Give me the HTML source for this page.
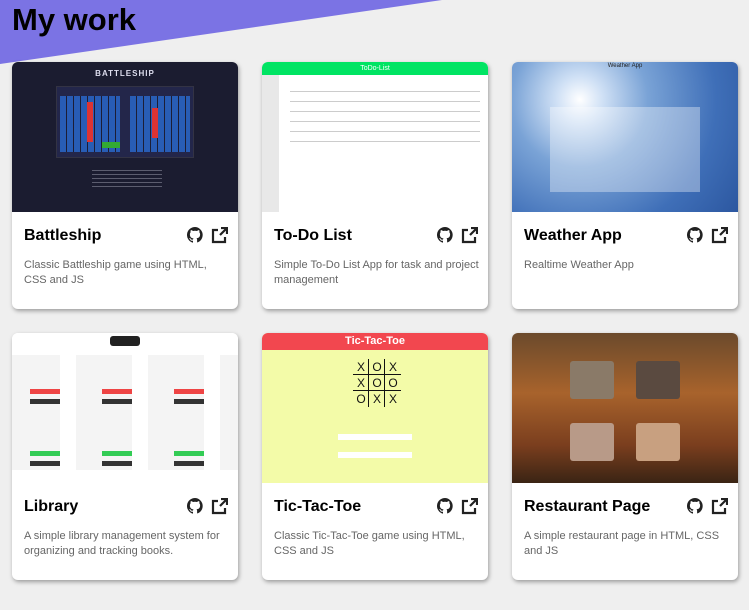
<!DOCTYPE html>
<html><head><style>
*{margin:0;padding:0;box-sizing:border-box}
body{width:749px;height:610px;background:#efefef;font-family:"Liberation Sans",sans-serif;position:relative;overflow:hidden}
.tri{position:absolute;left:0;top:0;width:749px;height:80px}
h1{position:absolute;left:12px;top:2px;font-size:31px;font-weight:bold;color:#000}
.card{position:absolute;width:226px;height:247px;background:#fff;border-radius:6px;box-shadow:1px 2px 4px rgba(0,0,0,.35);overflow:hidden}
.img{height:150px;position:relative;overflow:hidden}
.t{position:absolute;left:12px;top:165px;font-size:16px;font-weight:bold;color:#000}
.d{position:absolute;left:12px;top:196px;width:205px;font-size:11px;line-height:15px;color:#666}
.ic{position:absolute;right:10px;top:165px;display:flex;gap:8px}
</style></head><body>
<svg class="tri" viewBox="0 0 749 80"><polygon points="0,0 442,0 0,64" fill="#7b73e4"/></svg>
<h1>My work</h1>

<div class="card" style="left:12px;top:62px">
 <div class="img" style="background:#1b1c30">
  <div style="position:absolute;left:0;right:0;top:7px;text-align:center;color:#dde;font-size:8px;font-weight:bold;letter-spacing:1px">BATTLESHIP</div>
  <div style="position:absolute;left:44px;top:24px;width:138px;height:72px;border:1px solid #334;background:#23264a"></div>
  <div style="position:absolute;left:48px;top:34px;width:60px;height:56px;background:repeating-linear-gradient(90deg,#2a6bd0 0 6px,#1b1c30 6px 7px),#2a6bd0;opacity:.8"></div>
  <div style="position:absolute;left:118px;top:34px;width:60px;height:56px;background:repeating-linear-gradient(90deg,#2a6bd0 0 6px,#1b1c30 6px 7px);opacity:.8"></div>
  <div style="position:absolute;left:75px;top:40px;width:6px;height:40px;background:#d33"></div>
  <div style="position:absolute;left:140px;top:46px;width:6px;height:30px;background:#d33"></div>
  <div style="position:absolute;left:90px;top:80px;width:18px;height:6px;background:#3a3"></div>
  <div style="position:absolute;left:80px;top:108px;width:70px;height:20px;background:repeating-linear-gradient(#889 0 1px,transparent 1px 4px);opacity:.6"></div>
 </div>
 <div class="t">Battleship</div>
 <div class="ic"><svg width="16" height="16" viewBox="0 0 16 16"><path fill="#222" d="M8 0a8 8 0 0 0-2.5 15.6c.4 0 .5-.2.5-.4v-1.5c-2.2.5-2.7-1-2.7-1-.4-.9-.9-1.2-.9-1.2-.7-.5.1-.5.1-.5.8.1 1.2.8 1.2.8.7 1.3 1.9.9 2.3.7.1-.5.3-.9.5-1.1-1.8-.2-3.6-.9-3.6-4 0-.9.3-1.6.8-2.1-.1-.2-.4-1 .1-2.1 0 0 .7-.2 2.2.8a7.5 7.5 0 0 1 4 0c1.5-1 2.2-.8 2.2-.8.4 1.1.2 1.9.1 2.1.5.6.8 1.3.8 2.1 0 3.1-1.9 3.7-3.6 3.9.3.3.6.8.6 1.5v2.2c0 .2.1.5.6.4A8 8 0 0 0 8 0z"/></svg><svg width="17" height="17" viewBox="0 0 17 17"><path fill="none" stroke="#222" stroke-width="2.2" d="M7 3H2v12h12v-5M9 8l7-7M10 1h6v6"/></svg></div>
 <div class="d">Classic Battleship game using HTML, CSS and JS</div>
</div>

<div class="card" style="left:262px;top:62px">
 <div class="img" style="background:#fff">
  <div style="height:13px;background:#00e463;color:#fff;font-size:7px;text-align:center;line-height:13px">ToDo-List</div>
  <div style="position:absolute;left:0;top:13px;width:17px;bottom:0;background:#e8e8e8"></div>
  <div style="position:absolute;left:28px;top:20px;width:190px;height:60px;background:repeating-linear-gradient(transparent 0 9px,#ccc 9px 10px)"></div>
 </div>
 <div class="t">To-Do List</div>
 <div class="ic"><svg width="16" height="16" viewBox="0 0 16 16"><path fill="#222" d="M8 0a8 8 0 0 0-2.5 15.6c.4 0 .5-.2.5-.4v-1.5c-2.2.5-2.7-1-2.7-1-.4-.9-.9-1.2-.9-1.2-.7-.5.1-.5.1-.5.8.1 1.2.8 1.2.8.7 1.3 1.9.9 2.3.7.1-.5.3-.9.5-1.1-1.8-.2-3.6-.9-3.6-4 0-.9.3-1.6.8-2.1-.1-.2-.4-1 .1-2.1 0 0 .7-.2 2.2.8a7.5 7.5 0 0 1 4 0c1.5-1 2.2-.8 2.2-.8.4 1.1.2 1.9.1 2.1.5.6.8 1.3.8 2.1 0 3.1-1.9 3.7-3.6 3.9.3.3.6.8.6 1.5v2.2c0 .2.1.5.6.4A8 8 0 0 0 8 0z"/></svg><svg width="17" height="17" viewBox="0 0 17 17"><path fill="none" stroke="#222" stroke-width="2.2" d="M7 3H2v12h12v-5M9 8l7-7M10 1h6v6"/></svg></div>
 <div class="d">Simple To-Do List App for task and project management</div>
</div>

<div class="card" style="left:512px;top:62px">
 <div class="img" style="background:radial-gradient(circle at 30% 25%,#fff 0,#cfe0f5 12%,#7aa3d6 35%,#3f6fb8 70%,#2c57a0 100%)">
  <div style="position:absolute;left:38px;top:45px;width:150px;height:85px;background:rgba(255,255,255,.35)"></div>
  <div style="position:absolute;left:0;right:0;top:1px;text-align:center;font-size:6px;color:#222">Weather App</div>
 </div>
 <div class="t">Weather App</div>
 <div class="ic"><svg width="16" height="16" viewBox="0 0 16 16"><path fill="#222" d="M8 0a8 8 0 0 0-2.5 15.6c.4 0 .5-.2.5-.4v-1.5c-2.2.5-2.7-1-2.7-1-.4-.9-.9-1.2-.9-1.2-.7-.5.1-.5.1-.5.8.1 1.2.8 1.2.8.7 1.3 1.9.9 2.3.7.1-.5.3-.9.5-1.1-1.8-.2-3.6-.9-3.6-4 0-.9.3-1.6.8-2.1-.1-.2-.4-1 .1-2.1 0 0 .7-.2 2.2.8a7.5 7.5 0 0 1 4 0c1.5-1 2.2-.8 2.2-.8.4 1.1.2 1.9.1 2.1.5.6.8 1.3.8 2.1 0 3.1-1.9 3.7-3.6 3.9.3.3.6.8.6 1.5v2.2c0 .2.1.5.6.4A8 8 0 0 0 8 0z"/></svg><svg width="17" height="17" viewBox="0 0 17 17"><path fill="none" stroke="#222" stroke-width="2.2" d="M7 3H2v12h12v-5M9 8l7-7M10 1h6v6"/></svg></div>
 <div class="d">Realtime Weather App</div>
</div>

<div class="card" style="left:12px;top:333px">
 <div class="img" style="background:#fff">
  <div style="position:absolute;left:98px;top:3px;width:30px;height:10px;background:#222;border-radius:3px"></div>
  <div style="position:absolute;left:-20px;top:22px;width:270px;height:115px;background:repeating-linear-gradient(90deg,transparent 0 12px,#f4f4f4 12px 68px,transparent 68px 72px)"></div>
  <div style="position:absolute;left:0;top:56px;width:226px;height:5px;background:repeating-linear-gradient(90deg,transparent 0 18px,#ee4444 18px 48px,transparent 48px 72px)"></div>
  <div style="position:absolute;left:0;top:66px;width:226px;height:5px;background:repeating-linear-gradient(90deg,transparent 0 18px,#333 18px 48px,transparent 48px 72px)"></div>
  <div style="position:absolute;left:0;top:118px;width:226px;height:5px;background:repeating-linear-gradient(90deg,transparent 0 18px,#33cc55 18px 48px,transparent 48px 72px)"></div>
  <div style="position:absolute;left:0;top:128px;width:226px;height:5px;background:repeating-linear-gradient(90deg,transparent 0 18px,#333 18px 48px,transparent 48px 72px)"></div>
 </div>
 <div class="t">Library</div>
 <div class="ic"><svg width="16" height="16" viewBox="0 0 16 16"><path fill="#222" d="M8 0a8 8 0 0 0-2.5 15.6c.4 0 .5-.2.5-.4v-1.5c-2.2.5-2.7-1-2.7-1-.4-.9-.9-1.2-.9-1.2-.7-.5.1-.5.1-.5.8.1 1.2.8 1.2.8.7 1.3 1.9.9 2.3.7.1-.5.3-.9.5-1.1-1.8-.2-3.6-.9-3.6-4 0-.9.3-1.6.8-2.1-.1-.2-.4-1 .1-2.1 0 0 .7-.2 2.2.8a7.5 7.5 0 0 1 4 0c1.5-1 2.2-.8 2.2-.8.4 1.1.2 1.9.1 2.1.5.6.8 1.3.8 2.1 0 3.1-1.9 3.7-3.6 3.9.3.3.6.8.6 1.5v2.2c0 .2.1.5.6.4A8 8 0 0 0 8 0z"/></svg><svg width="17" height="17" viewBox="0 0 17 17"><path fill="none" stroke="#222" stroke-width="2.2" d="M7 3H2v12h12v-5M9 8l7-7M10 1h6v6"/></svg></div>
 <div class="d">A simple library management system for organizing and tracking books.</div>
</div>

<div class="card" style="left:262px;top:333px">
 <div class="img" style="background:#f3fba8">
  <div style="height:17px;background:#f2474f;color:#fff;font-size:11px;font-weight:bold;text-align:center;line-height:17px">Tic-Tac-Toe</div>
  <div style="position:absolute;left:91px;top:26px;width:48px;height:48px;font-size:12px;line-height:16px;color:#111;display:grid;grid-template-columns:repeat(3,16px);text-align:center;background:linear-gradient(90deg,transparent 15px,#111 15px 16px,transparent 16px 31px,#111 31px 32px,transparent 32px),linear-gradient(transparent 15px,#111 15px 16px,transparent 16px 31px,#111 31px 32px,transparent 32px)"><span>X</span><span>O</span><span>X</span><span>X</span><span>O</span><span>O</span><span>O</span><span>X</span><span>X</span></div>
  <div style="position:absolute;left:76px;top:101px;width:74px;height:6px;background:#fff"></div>
  <div style="position:absolute;left:76px;top:119px;width:74px;height:6px;background:#fff"></div>
 </div>
 <div class="t">Tic-Tac-Toe</div>
 <div class="ic"><svg width="16" height="16" viewBox="0 0 16 16"><path fill="#222" d="M8 0a8 8 0 0 0-2.5 15.6c.4 0 .5-.2.5-.4v-1.5c-2.2.5-2.7-1-2.7-1-.4-.9-.9-1.2-.9-1.2-.7-.5.1-.5.1-.5.8.1 1.2.8 1.2.8.7 1.3 1.9.9 2.3.7.1-.5.3-.9.5-1.1-1.8-.2-3.6-.9-3.6-4 0-.9.3-1.6.8-2.1-.1-.2-.4-1 .1-2.1 0 0 .7-.2 2.2.8a7.5 7.5 0 0 1 4 0c1.5-1 2.2-.8 2.2-.8.4 1.1.2 1.9.1 2.1.5.6.8 1.3.8 2.1 0 3.1-1.9 3.7-3.6 3.9.3.3.6.8.6 1.5v2.2c0 .2.1.5.6.4A8 8 0 0 0 8 0z"/></svg><svg width="17" height="17" viewBox="0 0 17 17"><path fill="none" stroke="#222" stroke-width="2.2" d="M7 3H2v12h12v-5M9 8l7-7M10 1h6v6"/></svg></div>
 <div class="d">Classic Tic-Tac-Toe game using HTML, CSS and JS</div>
</div>

<div class="card" style="left:512px;top:333px">
 <div class="img" style="background:linear-gradient(180deg,#6b4a2c,#a8632c 40%,#7a3e1e 75%,#3a2414)">
  <div style="position:absolute;left:58px;top:28px;width:44px;height:38px;background:#8a7a68;border-radius:3px"></div>
  <div style="position:absolute;left:124px;top:28px;width:44px;height:38px;background:#5a4a40;border-radius:3px"></div>
  <div style="position:absolute;left:58px;top:90px;width:44px;height:38px;background:#b89a88;border-radius:3px"></div>
  <div style="position:absolute;left:124px;top:90px;width:44px;height:38px;background:#c8a080;border-radius:3px"></div>
 </div>
 <div class="t">Restaurant Page</div>
 <div class="ic"><svg width="16" height="16" viewBox="0 0 16 16"><path fill="#222" d="M8 0a8 8 0 0 0-2.5 15.6c.4 0 .5-.2.5-.4v-1.5c-2.2.5-2.7-1-2.7-1-.4-.9-.9-1.2-.9-1.2-.7-.5.1-.5.1-.5.8.1 1.2.8 1.2.8.7 1.3 1.9.9 2.3.7.1-.5.3-.9.5-1.1-1.8-.2-3.6-.9-3.6-4 0-.9.3-1.6.8-2.1-.1-.2-.4-1 .1-2.1 0 0 .7-.2 2.2.8a7.5 7.5 0 0 1 4 0c1.5-1 2.2-.8 2.2-.8.4 1.1.2 1.9.1 2.1.5.6.8 1.3.8 2.1 0 3.1-1.9 3.7-3.6 3.9.3.3.6.8.6 1.5v2.2c0 .2.1.5.6.4A8 8 0 0 0 8 0z"/></svg><svg width="17" height="17" viewBox="0 0 17 17"><path fill="none" stroke="#222" stroke-width="2.2" d="M7 3H2v12h12v-5M9 8l7-7M10 1h6v6"/></svg></div>
 <div class="d">A simple restaurant page in HTML, CSS and JS</div>
</div>
</body></html>
